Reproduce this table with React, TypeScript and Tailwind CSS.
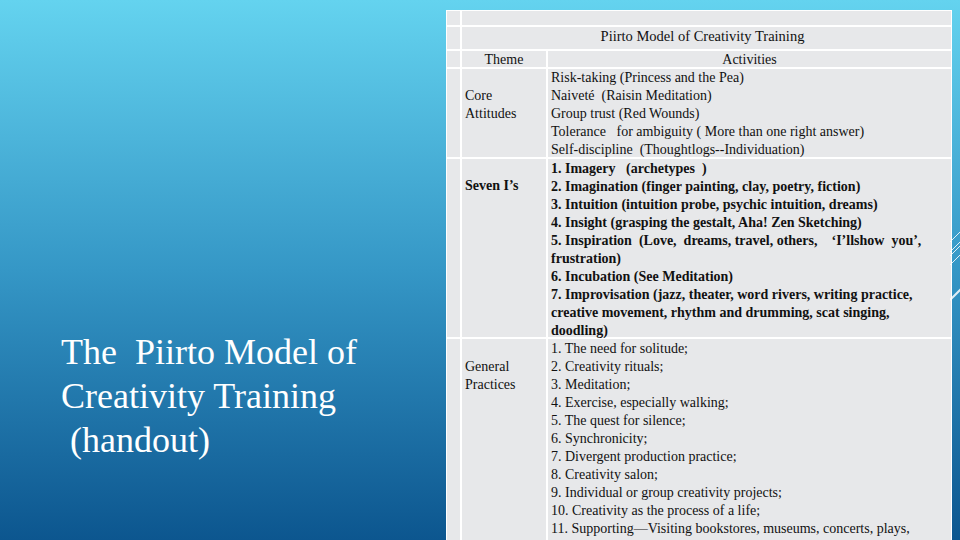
import React from "react";

const core = [
  "Risk-taking (Princess and the Pea)",
  "Naiveté  (Raisin Meditation)",
  "Group trust (Red Wounds)",
  "Tolerance   for ambiguity ( More than one right answer)",
  "Self-discipline  (Thoughtlogs--Individuation)",
];

const sevenIs = [
  "1. Imagery   (archetypes  )",
  "2. Imagination (finger painting, clay, poetry, fiction)",
  "3. Intuition (intuition probe, psychic intuition, dreams)",
  "4. Insight (grasping the gestalt, Aha! Zen Sketching)",
  "5. Inspiration  (Love,  dreams, travel, others,    \u2018I\u2019llshow  you\u2019,",
  "frustration)",
  "6. Incubation (See Meditation)",
  "7. Improvisation (jazz, theater, word rivers, writing practice,",
  "creative movement, rhythm and drumming, scat singing,",
  "doodling)",
];

const general = [
  "1. The need for solitude;",
  "2. Creativity rituals;",
  "3. Meditation;",
  "4. Exercise, especially walking;",
  "5. The quest for silence;",
  "6. Synchronicity;",
  "7. Divergent production practice;",
  "8. Creativity salon;",
  "9. Individual or group creativity projects;",
  "10. Creativity as the process of a life;",
  "11. Supporting\u2014Visiting bookstores, museums, concerts, plays,",
];

function Lines({ items, bold }: { items: string[]; bold?: boolean }) {
  return (
    <div className={bold ? "font-bold" : ""}>
      {items.map((t, i) => (
        <div key={i} className="whitespace-pre h-[18px] leading-[18px]">
          {t}
        </div>
      ))}
    </div>
  );
}

export default function App() {
  return (
    <div className="relative w-[960px] h-[540px] overflow-hidden bg-gradient-to-b from-[#64d3ef] via-[#3597c6] to-[#0c568f] flex [font-family:'Liberation_Serif',serif]">
      <div className="w-[446px] shrink-0 pt-[330px] pl-[61px] text-white text-[36px] leading-[44px]">
        <div className="whitespace-pre">The  Piirto Model of</div>
        <div className="whitespace-pre">Creativity Training</div>
        <div className="whitespace-pre"> (handout)</div>
      </div>

      <div className="mt-[10px] w-[506px] h-[560px] border border-white bg-white">
        <div className="grid grid-cols-[13px_84px_1fr] grid-rows-[14px_22px_16px_88px_178px_1fr] gap-[2px] h-full text-[14px] text-[#111]">
          <div className="bg-[#e7e8ea]" />
          <div className="bg-[#e7e8ea] col-span-2" />

          <div className="bg-[#e7e8ea]" />
          <div className="bg-[#e7e8ea] col-span-2 flex items-center justify-center pb-[2px] pr-[8px] text-[14.5px]">
            Piirto Model of Creativity Training
          </div>

          <div className="bg-[#e7e8ea]" />
          <div className="bg-[#e7e8ea] flex items-center justify-center leading-[16px] pt-[2px]">Theme</div>
          <div className="bg-[#e7e8ea] flex items-center justify-center leading-[16px] pt-[2px]">Activities</div>

          <div className="bg-[#e7e8ea]" />
          <div className="bg-[#e7e8ea] pl-[3px] pt-[18px] leading-[18px]">
            <div>Core</div>
            <div>Attitudes</div>
          </div>
          <div className="bg-[#e7e8ea] pl-[3px]">
            <Lines items={core} />
          </div>

          <div className="bg-[#e7e8ea]" />
          <div className="bg-[#e7e8ea] pl-[3px] pt-[18px] leading-[18px] font-bold">
            <div className="whitespace-pre">Seven I’s</div>
          </div>
          <div className="bg-[#e7e8ea] pl-[3px] pt-[1px]">
            <Lines items={sevenIs} bold />
          </div>

          <div className="bg-[#e7e8ea]" />
          <div className="bg-[#e7e8ea] pl-[3px] pt-[19px] leading-[18px]">
            <div>General</div>
            <div>Practices</div>
          </div>
          <div className="bg-[#e7e8ea] pl-[3px] pt-[1px]">
            <Lines items={general} />
          </div>
        </div>
      </div>

      <svg
        className="absolute left-[950px] top-[225px]"
        width="12"
        height="80"
        viewBox="0 0 12 80"
      >
        <g stroke="white" strokeWidth="1" opacity="0.85" fill="none">
          <line x1="0" y1="17" x2="12" y2="5" />
          <line x1="0" y1="27" x2="12" y2="15" />
          <line x1="0" y1="31" x2="12" y2="19" />
          <line x1="0" y1="40" x2="12" y2="28" />
          <line x1="0" y1="75" x2="12" y2="63" strokeWidth="2" />
        </g>
      </svg>
    </div>
  );
}
